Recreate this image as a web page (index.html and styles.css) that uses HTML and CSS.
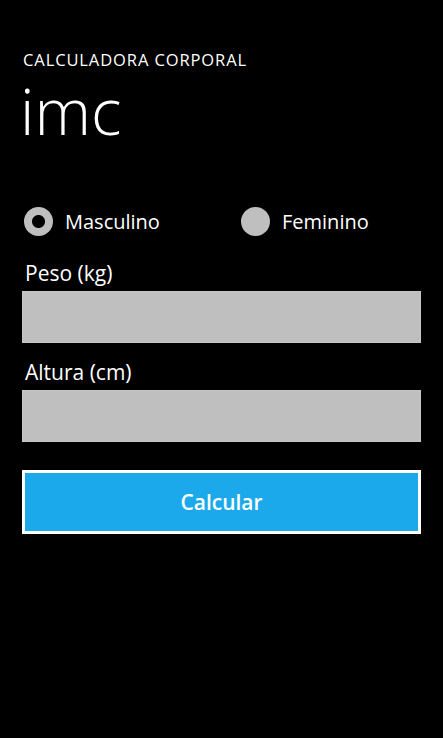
FILE: index.html
```html
<!DOCTYPE html>
<html lang="pt">
<head>
    <meta charset="UTF-8">
    <meta name="viewport" content="width=device-width, initial-scale=1.0">
    <title>IMC</title>
    <link rel="stylesheet" href="styles.css">
</head>
<body>

<div class="page">
    <div class="app-title">CALCULADORA CORPORAL</div>
    <div class="page-title">imc</div>

    <div class="gender">
        <label class="option">
            <input type="radio" name="sexo" value="m" checked>
            <span>Masculino</span>
        </label>
        <label class="option">
            <input type="radio" name="sexo" value="f">
            <span>Feminino</span>
        </label>
    </div>

    <label class="field-label" for="peso">Peso (kg)</label>
    <input type="text" id="peso" class="field">

    <label class="field-label second" for="altura">Altura (cm)</label>
    <input type="text" id="altura" class="field">

    <button class="calc">Calcular</button>
</div>

</body>
</html>
```

FILE: styles.css
```css
body {
    margin: 0;
    background-color: #000;
    color: #fff;
    font-family: "Open Sans", "Noto Sans", sans-serif;
    height: 100vh;
}
.page {
    padding: 50px 22px 0 22px;
}
.app-title {
    font-size: 16.5px;
    letter-spacing: 0.9px;
    line-height: 20px;
    padding-left: 1px;
}
.page-title {
    font-size: 64px;
    font-weight: 300;
    line-height: 72px;
    margin-top: 5px;
    margin-left: -2px;
}
.gender {
    display: flex;
    margin-top: 59px;
    height: 30px;
}
.option {
    display: flex;
    flex-shrink: 0;
    align-items: center;
    width: 215px;
    font-size: 20px;
    padding-left: 2px;
}
.option input {
    appearance: none;
    -webkit-appearance: none;
    width: 29px;
    height: 29px;
    margin: 0 12px 0 0;
    border-radius: 50%;
    background-color: #bfbfbf;
}
.option input:checked {
    background: radial-gradient(circle, #000 6px, #bfbfbf 7px);
}
.field-label {
    display: block;
    font-size: 21px;
    line-height: 28px;
    margin-top: 23px;
    padding-left: 3px;
}
.field-label.second {
    margin-top: 15px;
}
.field {
    display: block;
    box-sizing: border-box;
    width: 399px;
    height: 52px;
    margin: 4px 0 0 0;
    border: 1px solid #c6c6c6;
    background-color: #bfbfbf;
    outline: none;
}
.calc {
    display: block;
    box-sizing: border-box;
    width: 399px;
    height: 64px;
    margin-top: 28px;
    border: 3px solid #fff;
    background-color: #1ba9ec;
    color: #fff;
    font-family: "Open Sans", "Noto Sans", sans-serif;
    font-size: 21px;
    font-weight: 600;
}
```
